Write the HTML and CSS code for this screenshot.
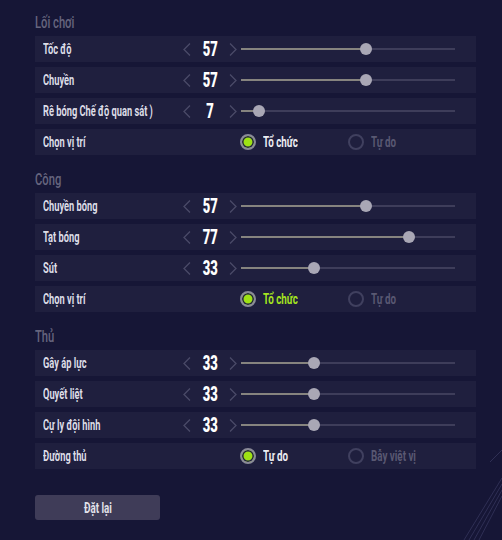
FILE: index.html
```html
<!DOCTYPE html>
<html lang="vi">
<head>
<meta charset="utf-8">
<link rel="stylesheet" href="styles.css">
</head>
<body>
<div class="page">
  <section class="group">
    <h2 class="title"><span class="sq">Lối chơi</span></h2>
    <div class="row">
      <span class="label"><span class="lq">Tốc độ</span></span>
      <span class="stepper"><svg class="chev" viewBox="0 0 8 14"><polyline points="7,1 1,7 7,13"/></svg><b class="num"><span class="nq">57</span></b><svg class="chev" viewBox="0 0 8 14"><polyline points="1,1 7,7 1,13"/></svg></span>
      <span class="slider" style="--v:57"><i class="fill"></i><i class="thumb"></i></span>
    </div>
    <div class="row">
      <span class="label"><span class="lq">Chuyền</span></span>
      <span class="stepper"><svg class="chev" viewBox="0 0 8 14"><polyline points="7,1 1,7 7,13"/></svg><b class="num"><span class="nq">57</span></b><svg class="chev" viewBox="0 0 8 14"><polyline points="1,1 7,7 1,13"/></svg></span>
      <span class="slider" style="--v:57"><i class="fill"></i><i class="thumb"></i></span>
    </div>
    <div class="row">
      <span class="label"><span class="lq">Rê bóng Chế độ quan sát )</span></span>
      <span class="stepper"><svg class="chev" viewBox="0 0 8 14"><polyline points="7,1 1,7 7,13"/></svg><b class="num"><span class="nq">7</span></b><svg class="chev" viewBox="0 0 8 14"><polyline points="1,1 7,7 1,13"/></svg></span>
      <span class="slider" style="--v:7"><i class="fill"></i><i class="thumb"></i></span>
    </div>
    <div class="row">
      <span class="label"><span class="lq">Chọn vị trí</span></span>
      <span class="radios">
        <span class="opt on"><i class="dot"></i><span class="otext"><span class="sq">Tổ chức</span></span></span>
        <span class="opt"><i class="dot"></i><span class="otext"><span class="sq">Tự do</span></span></span>
      </span>
    </div>
  </section>

  <section class="group">
    <h2 class="title"><span class="sq">Công</span></h2>
    <div class="row">
      <span class="label"><span class="lq">Chuyền bóng</span></span>
      <span class="stepper"><svg class="chev" viewBox="0 0 8 14"><polyline points="7,1 1,7 7,13"/></svg><b class="num"><span class="nq">57</span></b><svg class="chev" viewBox="0 0 8 14"><polyline points="1,1 7,7 1,13"/></svg></span>
      <span class="slider" style="--v:57"><i class="fill"></i><i class="thumb"></i></span>
    </div>
    <div class="row">
      <span class="label"><span class="lq">Tạt bóng</span></span>
      <span class="stepper"><svg class="chev" viewBox="0 0 8 14"><polyline points="7,1 1,7 7,13"/></svg><b class="num"><span class="nq">77</span></b><svg class="chev" viewBox="0 0 8 14"><polyline points="1,1 7,7 1,13"/></svg></span>
      <span class="slider" style="--v:77"><i class="fill"></i><i class="thumb"></i></span>
    </div>
    <div class="row">
      <span class="label"><span class="lq">Sút</span></span>
      <span class="stepper"><svg class="chev" viewBox="0 0 8 14"><polyline points="7,1 1,7 7,13"/></svg><b class="num"><span class="nq">33</span></b><svg class="chev" viewBox="0 0 8 14"><polyline points="1,1 7,7 1,13"/></svg></span>
      <span class="slider" style="--v:33"><i class="fill"></i><i class="thumb"></i></span>
    </div>
    <div class="row">
      <span class="label"><span class="lq">Chọn vị trí</span></span>
      <span class="radios">
        <span class="opt on accent"><i class="dot"></i><span class="otext"><span class="sq">Tổ chức</span></span></span>
        <span class="opt"><i class="dot"></i><span class="otext"><span class="sq">Tự do</span></span></span>
      </span>
    </div>
  </section>

  <section class="group">
    <h2 class="title"><span class="sq">Thủ</span></h2>
    <div class="row">
      <span class="label"><span class="lq">Gây áp lực</span></span>
      <span class="stepper"><svg class="chev" viewBox="0 0 8 14"><polyline points="7,1 1,7 7,13"/></svg><b class="num"><span class="nq">33</span></b><svg class="chev" viewBox="0 0 8 14"><polyline points="1,1 7,7 1,13"/></svg></span>
      <span class="slider" style="--v:33"><i class="fill"></i><i class="thumb"></i></span>
    </div>
    <div class="row">
      <span class="label"><span class="lq">Quyết liệt</span></span>
      <span class="stepper"><svg class="chev" viewBox="0 0 8 14"><polyline points="7,1 1,7 7,13"/></svg><b class="num"><span class="nq">33</span></b><svg class="chev" viewBox="0 0 8 14"><polyline points="1,1 7,7 1,13"/></svg></span>
      <span class="slider" style="--v:33"><i class="fill"></i><i class="thumb"></i></span>
    </div>
    <div class="row">
      <span class="label"><span class="lq">Cự ly đội hình</span></span>
      <span class="stepper"><svg class="chev" viewBox="0 0 8 14"><polyline points="7,1 1,7 7,13"/></svg><b class="num"><span class="nq">33</span></b><svg class="chev" viewBox="0 0 8 14"><polyline points="1,1 7,7 1,13"/></svg></span>
      <span class="slider" style="--v:33"><i class="fill"></i><i class="thumb"></i></span>
    </div>
    <div class="row">
      <span class="label"><span class="lq">Đường thủ</span></span>
      <span class="radios">
        <span class="opt on"><i class="dot"></i><span class="otext"><span class="sq">Tự do</span></span></span>
        <span class="opt"><i class="dot"></i><span class="otext"><span class="sq">Bẫy việt vị</span></span></span>
      </span>
    </div>
  </section>

  <button class="reset"><span class="bq">Đặt lại</span></button>
</div>
<svg class="deco" viewBox="0 0 60 100" width="60" height="100">
  <line x1="60" y1="10" x2="48" y2="22"/>
  <line x1="60" y1="38" x2="22" y2="100"/>
  <line x1="60" y1="44" x2="27" y2="100"/>
  <line x1="60" y1="50" x2="32" y2="100"/>
  <line x1="60" y1="56" x2="37" y2="100"/>
</svg>
</body>
</html>
```

FILE: styles.css
```css
* { box-sizing: border-box; }
html, body { margin: 0; padding: 0; }
body {
  width: 502px;
  height: 540px;
  background: #161636;
  font-family: Roboto, "Liberation Sans", sans-serif;
  font-weight: 700;
  overflow: hidden;
  position: relative;
}
.sq {
  display: inline-block;
  white-space: nowrap;
  transform: scaleX(0.7);
  transform-origin: left center;
}
.lq {
  display: inline-block;
  white-space: nowrap;
  transform: scaleX(0.64);
  transform-origin: left center;
}
.nq {
  display: inline-block;
  transform: scaleX(0.62);
  transform-origin: center center;
}
.bq {
  display: inline-block;
  transform: scaleX(0.7);
  transform-origin: center center;
}
.page {
  padding: 14px 0 0 35px;
  width: 476px;
  display: flex;
  flex-direction: column;
}
.group {
  display: flex;
  flex-direction: column;
  gap: 5px;
  margin-bottom: 16px;
}
.title {
  margin: 0;
  height: 17px;
  font-size: 16px;
  font-weight: 500;
  color: #66657e;
  line-height: 17px;
  width: 200px;
}
.row {
  height: 26px;
  background: #1f1f3e;
  display: grid;
  grid-template-columns: 140px 58px 214px;
  align-items: center;
  padding-left: 8px;
}
.label {
  font-size: 14.5px;
  color: #dcdce6;
  white-space: nowrap;
  width: 140px;
}
.stepper {
  display: flex;
  align-items: center;
  justify-content: space-between;
  width: 54px;
}
.chev {
  width: 8px;
  height: 15px;
  fill: none;
  stroke: #4a4a68;
  stroke-width: 1.3;
  flex: none;
}
.num {
  font-size: 21px;
  color: #ffffff;
  line-height: 20px;
  flex: 1;
  text-align: center;
}
.slider {
  position: relative;
  height: 2px;
  background: #3e3d5a;
  display: block;
}
.fill {
  position: absolute;
  left: 0; top: 0;
  height: 2px;
  width: calc(2.5px + var(--v) * 2.15px);
  background: #86847f;
}
.thumb {
  position: absolute;
  top: -5px;
  left: calc(2.5px + var(--v) * 2.15px - 6px);
  width: 12px;
  height: 12px;
  border-radius: 50%;
  background: #a9a7b5;
}
.radios {
  grid-column: 3;
  display: flex;
  margin-left: -1px;
}
.opt {
  display: flex;
  align-items: center;
  width: 118px;
  font-size: 14px;
  color: #595872;
}
.dot {
  width: 16px;
  height: 16px;
  border-radius: 50%;
  border: 2px solid #40405f;
  margin-right: 7px;
  flex: none;
}
.opt.on { color: #ececf2; }
.opt.on .dot {
  border-color: #8a8a98;
  background: #9ee214;
  box-shadow: inset 0 0 0 1.5px #1f1f3e;
}
.opt.accent { color: #a4e420; }
.reset {
  margin-top: 10px;
  width: 125px;
  height: 25px;
  border: 0;
  border-radius: 3px;
  background: #3f3c58;
  color: #e2e2ea;
  font-family: inherit;
  font-weight: 700;
  font-size: 14px;
  padding: 0;
}
.deco {
  position: absolute;
  right: 0;
  bottom: 0;
  stroke: #3a3a62;
  stroke-width: 1;
  opacity: 0.7;
}
```
